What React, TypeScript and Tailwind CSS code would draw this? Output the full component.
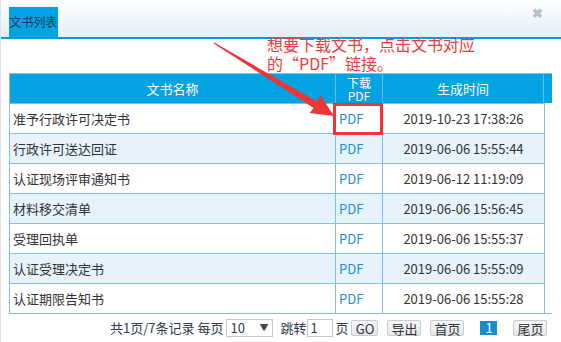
import React from "react";

const rows = [
  { name: "准予行政许可决定书", time: "2019-10-23 17:38:26" },
  { name: "行政许可送达回证", time: "2019-06-06 15:55:44" },
  { name: "认证现场评审通知书", time: "2019-06-12 11:19:09" },
  { name: "材料移交清单", time: "2019-06-06 15:56:45" },
  { name: "受理回执单", time: "2019-06-06 15:55:37" },
  { name: "认证受理决定书", time: "2019-06-06 15:55:09" },
  { name: "认证期限告知书", time: "2019-06-06 15:55:28" },
];

const font = { fontFamily: '"Noto Sans CJK SC", "Noto Sans", sans-serif' };

const Btn = ({ children, w }: { children: React.ReactNode; w: string }) => (
  <button
    className={`${w} h-[16px] shrink-0 flex items-center justify-center whitespace-nowrap rounded-[2px] border border-[#c8ccd2] bg-gradient-to-b from-[#f6f7f9] to-[#e4e7eb] text-[13px] leading-none text-[#333]`}
  >
    {children}
  </button>
);

export default function App() {
  return (
    <div
      className="relative w-[561px] h-[342px] overflow-hidden bg-white border-l border-[#dfe3e8] text-[#333]"
      style={font}
    >
      {/* 标题栏 */}
      <div className="flex h-[39px] items-end justify-between border-b-2 border-[#0a9ad8] bg-gradient-to-b from-white to-[#e6edf8] pl-[8px] pr-[18px]">
        <div className="flex h-[30px] w-[49px] items-center justify-center whitespace-nowrap bg-[#02a3e2] text-[12px] text-[#12385a]">
          文书列表
        </div>
        <div className="mb-[20px] flex h-[10px] w-[12px] items-center justify-center text-[13px] font-bold leading-none text-[#b9bfc7]">
          ✖
        </div>
      </div>

      {/* 表格 */}
      <div className="ml-[8px] mt-[34px] w-[543px] border-b border-l border-t border-[#7fc0e0]">
        <div className="flex h-[29px] bg-[#02a3e2] text-[13px] text-white">
          <div className="flex w-[326px] items-center justify-center border-r border-[#5fbfe8]">
            文书名称
          </div>
          <div className="flex w-[47px] flex-col items-center justify-center border-r border-[#5fbfe8] text-[12px] leading-[13px]">
            <span>下载</span>
            <span>PDF</span>
          </div>
          <div className="flex w-[161px] items-center justify-center border-r border-[#5fbfe8]">
            生成时间
          </div>
          <div className="flex-1" />
        </div>
        {rows.map((r, i) => (
          <div
            key={r.name}
            className={`flex h-[30px] w-[535px] border-r border-t border-[#7fc0e0] text-[13px] ${
              i % 2 === 1 ? "bg-[#e6f3fd]" : "bg-white"
            }`}
          >
            <div className="flex w-[326px] items-center border-r border-[#7fc0e0] pl-[3px]">
              {r.name}
            </div>
            <div className="flex w-[47px] items-center border-r border-[#7fc0e0] pl-[3px] text-[#1d8fd2]">
              PDF
            </div>
            <div className="flex flex-1 items-center justify-center">{r.time}</div>
          </div>
        ))}
      </div>

      {/* 分页 */}
      <div className="flex h-[28px] items-center whitespace-nowrap pl-[109px] text-[13px] text-[#2d3b4d]">
        <span className="shrink-0">共1页/7条记录 每页</span>
        <div className="ml-[3px] flex h-[18px] w-[47px] shrink-0 items-center justify-between border border-[#c4c8cd] pl-[3px] pr-[4px]">
          <span>10</span>
          <span className="text-[9px] text-[#444]">▼</span>
        </div>
        <span className="ml-[7px] shrink-0">跳转</span>
        <div className="ml-[1px] flex h-[18px] w-[26px] shrink-0 items-center border border-[#c4c8cd] pl-[2px]">1</div>
        <span className="ml-[2px] shrink-0">页</span>
        <div className="ml-[3px]">
          <Btn w="w-[27px]">GO</Btn>
        </div>
        <div className="ml-[9px]">
          <Btn w="w-[34px]">导出</Btn>
        </div>
        <div className="ml-[9px]">
          <Btn w="w-[34px]">首页</Btn>
        </div>
        <div className="ml-[16px] flex h-[14px] w-[17px] shrink-0 items-center justify-center bg-[#168fc8] text-[13px] text-white">
          1
        </div>
        <div className="ml-[16px]">
          <Btn w="w-[34px]">尾页</Btn>
        </div>
      </div>

      {/* 标注 */}
      <div className="absolute left-[332px] top-[103px] h-[32px] w-[50px] border-[3px] border-[#ee3535]" />
      <svg className="pointer-events-none absolute left-0 top-0" width="561" height="342">
        <polygon
          fill="#ee3535"
          points="212.7,43.4 213.3,42.6 315.4,101.3 319.5,95.2 333,116 308.5,113.1 312.6,107.9"
        />
      </svg>
      <div className="absolute left-[266px] top-[35px] whitespace-nowrap text-[16px] leading-[19px] text-[#f03a3a]">
        <div>想要下载文书，点击文书对应</div>
        <div>的“PDF”链接。</div>
      </div>
    </div>
  );
}
